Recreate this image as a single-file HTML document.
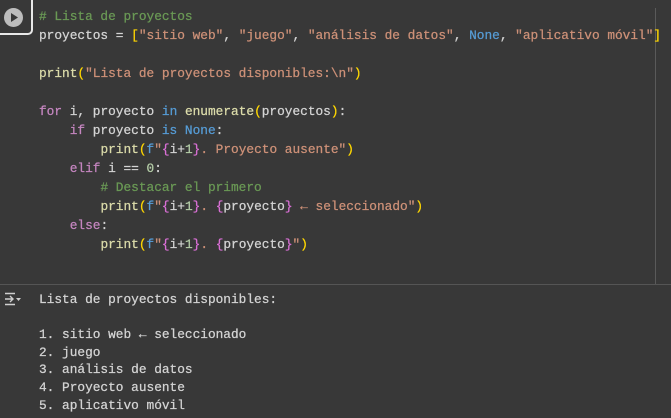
<!DOCTYPE html>
<html><head><meta charset="utf-8"><style>
html,body{margin:0;padding:0;width:671px;height:418px;overflow:hidden;background:#383838;}
body{position:relative;font-family:"Liberation Mono",monospace;font-size:12.8px;color:#d4d4d4;-webkit-text-stroke:0.25px currentColor;}
pre{margin:0;font:inherit;white-space:pre;}
#code{position:absolute;left:39px;top:7px;line-height:19px;}
#out{position:absolute;left:39px;top:291px;line-height:17.6px;color:#d4d4d4;}
.c{color:#6a9955}.s{color:#ce9178}.k{color:#c586c0}.b{color:#569cd6}.f{color:#dcdcaa}
.n{color:#b5cea8}.y{color:#ffd700}.p{color:#da70d6}
#ruler{position:absolute;left:655px;top:8px;width:1px;height:276px;background:#5a5a5a;}
#div{position:absolute;left:0;top:284px;width:671px;height:1px;background:#555;}
#run{position:absolute;left:-3px;top:-3px;width:36px;height:38px;border:2px solid #e8e8e8;border-radius:0 0 5px 0;box-sizing:border-box;}
</style></head><body>
<div id="run"></div>
<svg style="position:absolute;left:3px;top:7px" width="21" height="21" viewBox="0 0 21 21"><circle cx="10.5" cy="10.5" r="9.5" fill="#bdbdbd"/><path d="M8 6 L15 10.5 L8 15 Z" fill="#383838"/></svg>
<div id="ruler"></div>
<div id="div"></div>
<pre id="code"><span class="c"># Lista de proyectos</span>
proyectos = <span class="y">[</span><span class="s">"sitio web"</span>, <span class="s">"juego"</span>, <span class="s">"análisis de datos"</span>, <span class="b">None</span>, <span class="s">"aplicativo móvil"</span><span class="y">]</span>

<span class="f">print</span><span class="y">(</span><span class="s">"Lista de proyectos disponibles:\n"</span><span class="y">)</span>

<span class="k">for</span> i, proyecto <span class="b">in</span> <span class="f">enumerate</span><span class="y">(</span>proyectos<span class="y">)</span>:
    <span class="k">if</span> proyecto <span class="b">is</span> <span class="b">None</span>:
        <span class="f">print</span><span class="y">(</span><span class="b">f</span><span class="s">"</span><span class="p">{</span>i+<span class="n">1</span><span class="p">}</span><span class="s">. Proyecto ausente"</span><span class="y">)</span>
    <span class="k">elif</span> i == <span class="n">0</span>:
        <span class="c"># Destacar el primero</span>
        <span class="f">print</span><span class="y">(</span><span class="b">f</span><span class="s">"</span><span class="p">{</span>i+<span class="n">1</span><span class="p">}</span><span class="s">. </span><span class="p">{</span>proyecto<span class="p">}</span><span class="s"> ← seleccionado"</span><span class="y">)</span>
    <span class="k">else</span>:
        <span class="f">print</span><span class="y">(</span><span class="b">f</span><span class="s">"</span><span class="p">{</span>i+<span class="n">1</span><span class="p">}</span><span class="s">. </span><span class="p">{</span>proyecto<span class="p">}</span><span class="s">"</span><span class="y">)</span></pre>
<svg style="position:absolute;left:4px;top:292px" width="18" height="14" viewBox="0 0 18 14"><path d="M1 1.5H11M1 12.5H11M1 7H9M6 4L9 7L6 10" stroke="#cfcfcf" stroke-width="1.4" fill="none"/><path d="M12 6H17L14.5 9Z" fill="#cfcfcf"/></svg>
<pre id="out">Lista de proyectos disponibles:

1. sitio web ← seleccionado
2. juego
3. análisis de datos
4. Proyecto ausente
5. aplicativo móvil</pre>
</body></html>
